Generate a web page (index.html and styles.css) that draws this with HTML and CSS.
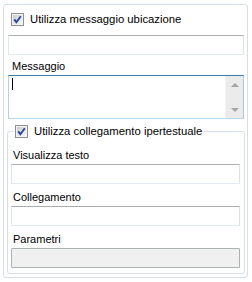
FILE: index.html
```html
<!DOCTYPE html>
<html>
<head>
<meta charset="utf-8">
<link rel="stylesheet" href="styles.css">
</head>
<body>
<div class="panel">
  <div class="check-row top-check">
    <span class="cb"><svg width="13" height="13" viewBox="0 0 13 13"><defs><linearGradient id="g1" x1="0" y1="0" x2="1" y2="1"><stop offset="0" stop-color="#c9ccd2"/><stop offset="1" stop-color="#f7f7f8"/></linearGradient></defs><rect x="0.5" y="0.5" width="12" height="12" fill="#f4f4f4" stroke="#8e8f8f"/><rect x="2" y="2" width="9" height="9" fill="url(#g1)"/><path d="M3.2 6.4 L5.4 9.2 L9.8 3.2" fill="none" stroke="#2a479a" stroke-width="1.9"/></svg></span>
    <span class="cb-text">Utilizza messaggio ubicazione</span>
  </div>
  <div class="textbox tb-wide"></div>
  <div class="label lbl-msg">Messaggio</div>
  <div class="textarea">
    <div class="ta-text"><span class="caret"></span></div>
    <div class="scrollbar"><span class="arrow up"></span><span class="arrow down"></span></div>
  </div>
  <fieldset class="group">
    <legend class="legend"><span class="check-row">
      <span class="cb"><svg width="13" height="13" viewBox="0 0 13 13"><defs><linearGradient id="g2" x1="0" y1="0" x2="1" y2="1"><stop offset="0" stop-color="#c9ccd2"/><stop offset="1" stop-color="#f7f7f8"/></linearGradient></defs><rect x="0.5" y="0.5" width="12" height="12" fill="#f4f4f4" stroke="#8e8f8f"/><rect x="2" y="2" width="9" height="9" fill="url(#g2)"/><path d="M3.2 6.4 L5.4 9.2 L9.8 3.2" fill="none" stroke="#2a479a" stroke-width="1.9"/></svg></span>
      <span class="cb-text">Utilizza collegamento ipertestuale</span>
    </span></legend>
    <div class="label in first">Visualizza testo</div>
    <div class="textbox tb-inner"></div>
    <div class="label in">Collegamento</div>
    <div class="textbox tb-inner"></div>
    <div class="label in">Parametri</div>
    <div class="textbox tb-inner disabled"></div>
  </fieldset>
</div>
</body>
</html>
```
FILE: styles.css
```css
html, body {
  margin: 0;
  background: #ffffff;
}
body {
  font-family: "Liberation Sans", Arial, sans-serif;
  font-size: 11px;
  color: #000000;
  width: 252px;
  height: 282px;
  overflow: hidden;
}
.panel {
  box-sizing: border-box;
  margin: 4px 0 0 3px;
  width: 245px;
  height: 274px;
  border: 1px solid #d5dfe5;
  border-radius: 3px;
}
.check-row {
  display: flex;
  align-items: center;
  height: 13px;
  line-height: 13px;
  gap: 6px;
}
.cb-text {
  font-size: 11.3px;
}
.cb {
  display: block;
  width: 13px;
  height: 13px;
}
.cb svg {
  display: block;
}
.top-check {
  margin-top: 8px;
  padding-left: 7px;
}
.textbox {
  box-sizing: border-box;
  height: 20px;
  border: 1px solid;
  border-color: #abadb3 #dbdfe6 #e3e9ef #e2e3ea;
  border-radius: 1px;
  background: #ffffff;
}
.tb-wide {
  margin: 9px 0 0 4px;
  width: 236px;
}
.label {
  line-height: 13px;
  height: 13px;
}
.lbl-msg {
  margin-top: 5px;
  padding-left: 8px;
}
.textarea {
  box-sizing: border-box;
  margin: 2px 0 0 4px;
  width: 236px;
  height: 44px;
  border: 1px solid;
  border-color: #3d7bad #a4c9e3 #b7d9ed #b5cfe7;
  display: flex;
}
.ta-text {
  flex: 1;
  padding: 2px 0 0 3px;
}
.caret {
  display: block;
  width: 1px;
  height: 12px;
  background: #000000;
}
.scrollbar {
  width: 17px;
  background: #ebebeb;
  border-left: 1px solid #f4f4f4;
  display: flex;
  flex-direction: column;
  justify-content: space-between;
}
.arrow {
  height: 17px;
  display: flex;
  align-items: center;
  justify-content: center;
}
.arrow::before {
  content: "";
  width: 0;
  height: 0;
  border-left: 4px solid transparent;
  border-right: 4px solid transparent;
}
.arrow.up::before {
  border-bottom: 4px solid #a6a6a6;
}
.arrow.down::before {
  border-top: 4px solid #a6a6a6;
}
.group {
  box-sizing: border-box;
  margin: 6px 0 0 3px;
  width: 238px;
  min-width: 0;
  padding: 11px 0 5px 0;
  border: 1px solid #d5dfe5;
  border-radius: 3px;
}
.legend {
  padding: 0 2px;
  margin-left: 5px;
}
.label.in {
  padding-left: 5px;
  margin-top: 7px;
}
.label.in.first {
  margin-top: 0;
}
.tb-inner {
  margin: 2px 0 0 3px;
  width: 229px;
}
.textbox.disabled {
  background: #f0f0f0;
  border-color: #adb2b5;
}
```
